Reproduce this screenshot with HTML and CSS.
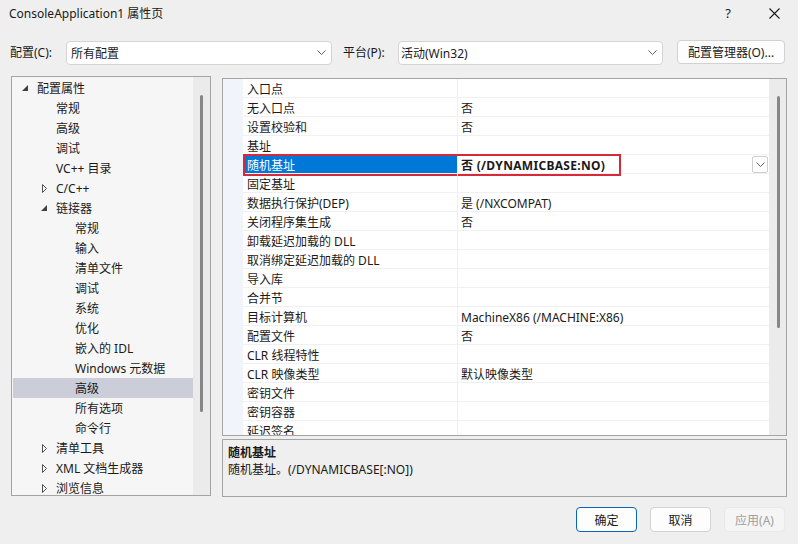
FILE: index.html
```html
<!DOCTYPE html>
<html lang="zh-CN">
<head>
    <meta charset="UTF-8">
    <meta name="viewport" content="width=device-width, initial-scale=1.0">
    <title>ConsoleApplication1 属性页</title>
    <link rel="stylesheet" href="styles.css">
</head>
<body>
<div class="dialog">
    <div class="titlebar">
        <span class="title">ConsoleApplication1 属性页</span>
        <span class="help">?</span>
        <span class="close">
            <svg width="11" height="11" viewBox="0 0 11 11"><path d="M0.5 0.5 L10.5 10.5 M10.5 0.5 L0.5 10.5" stroke="#1a1a1a" stroke-width="1.1" fill="none"/></svg>
        </span>
    </div>

    <div class="toolbar">
        <span class="tb-label">配置(C):</span>
        <div class="combo combo-config">
            <span>所有配置</span>
            <svg class="chev" width="9" height="5" viewBox="0 0 9 5"><path d="M0.5 0.5 L4.5 4.5 L8.5 0.5" stroke="#606060" fill="none"/></svg>
        </div>
        <span class="tb-label platform-label">平台(P):</span>
        <div class="combo combo-platform">
            <span>活动(Win32)</span>
            <svg class="chev" width="9" height="5" viewBox="0 0 9 5"><path d="M0.5 0.5 L4.5 4.5 L8.5 0.5" stroke="#606060" fill="none"/></svg>
        </div>
        <button class="btn btn-manager">配置管理器(O)...</button>
    </div>

    <div class="main">
        <div class="tree">
            <ul class="tree-list">
                <li class="node l0"><span class="toggle"><svg width="6" height="6" viewBox="0 0 6 6"><polygon points="6,0 6,6 0,6" fill="#404040"/></svg></span>配置属性</li>
                <li class="node l1"><span class="toggle"></span>常规</li>
                <li class="node l1"><span class="toggle"></span>高级</li>
                <li class="node l1"><span class="toggle"></span>调试</li>
                <li class="node l1"><span class="toggle"></span>VC++ 目录</li>
                <li class="node l1"><span class="toggle"><svg class="closed" width="5" height="9" viewBox="0 0 5 9"><polygon points="0.5,0.5 4.5,4.5 0.5,8.5" fill="none" stroke="#505050"/></svg></span>C/C++</li>
                <li class="node l1"><span class="toggle"><svg width="6" height="6" viewBox="0 0 6 6"><polygon points="6,0 6,6 0,6" fill="#404040"/></svg></span>链接器</li>
                <li class="node l2"><span class="toggle"></span>常规</li>
                <li class="node l2"><span class="toggle"></span>输入</li>
                <li class="node l2"><span class="toggle"></span>清单文件</li>
                <li class="node l2"><span class="toggle"></span>调试</li>
                <li class="node l2"><span class="toggle"></span>系统</li>
                <li class="node l2"><span class="toggle"></span>优化</li>
                <li class="node l2"><span class="toggle"></span>嵌入的 IDL</li>
                <li class="node l2"><span class="toggle"></span>Windows 元数据</li>
                <li class="node l2 selected"><span class="toggle"></span>高级</li>
                <li class="node l2"><span class="toggle"></span>所有选项</li>
                <li class="node l2"><span class="toggle"></span>命令行</li>
                <li class="node l1"><span class="toggle"><svg class="closed" width="5" height="9" viewBox="0 0 5 9"><polygon points="0.5,0.5 4.5,4.5 0.5,8.5" fill="none" stroke="#505050"/></svg></span>清单工具</li>
                <li class="node l1"><span class="toggle"><svg class="closed" width="5" height="9" viewBox="0 0 5 9"><polygon points="0.5,0.5 4.5,4.5 0.5,8.5" fill="none" stroke="#505050"/></svg></span>XML 文档生成器</li>
                <li class="node l1"><span class="toggle"><svg class="closed" width="5" height="9" viewBox="0 0 5 9"><polygon points="0.5,0.5 4.5,4.5 0.5,8.5" fill="none" stroke="#505050"/></svg></span>浏览信息</li>
            </ul>
            <div class="vscroll tree-scroll"><div class="thumb"></div></div>
        </div>

        <div class="right">
            <div class="grid">
                <div class="gutter"></div>
                <div class="rows">
                    <div class="row"><div class="name">入口点</div><div class="value"></div></div>
                    <div class="row"><div class="name">无入口点</div><div class="value">否</div></div>
                    <div class="row"><div class="name">设置校验和</div><div class="value">否</div></div>
                    <div class="row"><div class="name">基址</div><div class="value"></div></div>
                    <div class="row active">
                        <div class="name">随机基址</div>
                        <div class="value">否 (/DYNAMICBASE:NO)</div>
                        <span class="drop">
                            <svg width="9" height="5" viewBox="0 0 9 5"><path d="M0.5 0.5 L4.5 4.5 L8.5 0.5" stroke="#606060" fill="none"/></svg>
                        </span>
                        <span class="mark"></span>
                    </div>
                    <div class="row"><div class="name">固定基址</div><div class="value"></div></div>
                    <div class="row"><div class="name">数据执行保护(DEP)</div><div class="value">是 (/NXCOMPAT)</div></div>
                    <div class="row"><div class="name">关闭程序集生成</div><div class="value">否</div></div>
                    <div class="row"><div class="name">卸载延迟加载的 DLL</div><div class="value"></div></div>
                    <div class="row"><div class="name">取消绑定延迟加载的 DLL</div><div class="value"></div></div>
                    <div class="row"><div class="name">导入库</div><div class="value"></div></div>
                    <div class="row"><div class="name">合并节</div><div class="value"></div></div>
                    <div class="row"><div class="name">目标计算机</div><div class="value">MachineX86 (/MACHINE:X86)</div></div>
                    <div class="row"><div class="name">配置文件</div><div class="value">否</div></div>
                    <div class="row"><div class="name">CLR 线程特性</div><div class="value"></div></div>
                    <div class="row"><div class="name">CLR 映像类型</div><div class="value">默认映像类型</div></div>
                    <div class="row"><div class="name">密钥文件</div><div class="value"></div></div>
                    <div class="row"><div class="name">密钥容器</div><div class="value"></div></div>
                    <div class="row"><div class="name">延迟签名</div><div class="value"></div></div>
                </div>
                <div class="vscroll grid-scroll"><div class="thumb"></div></div>
            </div>
            <div class="desc">
                <div class="desc-title">随机基址</div>
                <div class="desc-text">随机基址。(/DYNAMICBASE[:NO])</div>
            </div>
        </div>
    </div>

    <div class="footer">
        <button class="btn btn-ok">确定</button>
        <button class="btn">取消</button>
        <button class="btn" disabled>应用(A)</button>
    </div>
</div>
</body>
</html>
```

FILE: styles.css
```css
body {
    margin: 0;
    background-color: #efefef;
    font-family: "Noto Sans", "Noto Sans CJK SC", sans-serif;
    font-size: 12px;
    color: #1a1a1a;
}
.dialog {
    width: 798px;
    height: 544px;
    overflow: hidden;
    background-color: #efefef;
}
.titlebar {
    display: flex;
    align-items: center;
    height: 26px;
    padding-left: 9px;
}
.title {
    flex: 1;
}
.help {
    width: 12px;
    margin-right: 35px;
    text-align: center;
    font-size: 13px;
}
.close {
    display: flex;
    width: 11px;
    margin-right: 18px;
}
.toolbar {
    display: flex;
    align-items: center;
    height: 25px;
    margin-top: 13px;
    padding-left: 10px;
}
.tb-label {
    width: 56px;
}
.platform-label {
    margin-left: 11px;
    width: 55px;
}
.combo {
    display: flex;
    align-items: center;
    box-sizing: border-box;
    height: 24px;
    margin-top: 2px;
    padding: 0 5px 0 4px;
    background-color: #fff;
    border: 1px solid #d4d4d4;
    border-radius: 4px;
}
.combo span {
    flex: 1;
}
.combo-config {
    width: 266px;
}
.combo-platform {
    width: 265px;
    padding-left: 2px;
}
.btn {
    box-sizing: border-box;
    height: 25px;
    padding: 0;
    font-family: inherit;
    font-size: 12px;
    color: #1a1a1a;
    background-color: #fdfdfd;
    border: 1px solid #d2d2d2;
    border-radius: 4px;
}
.btn-manager {
    width: 108px;
    height: 24px;
    margin-left: 14px;
}
.main {
    display: flex;
    gap: 11px;
    height: 421px;
    margin-top: 12px;
    padding-left: 11px;
}
.tree {
    display: flex;
    box-sizing: border-box;
    width: 200px;
    height: 420px;
    background-color: #f6f6f6;
    border: 1px solid #a4a4a4;
    overflow: hidden;
}
.tree-list {
    width: 181px;
    margin: 0;
    padding: 1px 0 0 0;
    list-style: none;
}
.node {
    display: flex;
    align-items: center;
    height: 20px;
    margin-left: 1px;
    white-space: nowrap;
}
.node.l0 { padding-left: 7px; }
.node.l1 { padding-left: 26px; }
.node.l2 { padding-left: 45px; }
.node.selected {
    background-color: #cbcdd9;
}
.toggle {
    display: flex;
    align-items: center;
    width: 17px;
    height: 20px;
    padding-left: 2px;
    box-sizing: border-box;
}
.toggle .closed {
    margin-left: 1px;
}
.vscroll {
    position: relative;
    width: 17px;
    background-color: #ebebeb;
}
.thumb {
    width: 3px;
    border-radius: 2px;
    background-color: #878787;
}
.tree-scroll .thumb {
    margin: 18px 0 0 7px;
    height: 317px;
}
.right {
    display: flex;
    flex-direction: column;
    gap: 3px;
    width: 565px;
    padding-top: 2px;
}
.grid {
    display: flex;
    box-sizing: border-box;
    height: 358px;
    background-color: #fff;
    border: 1px solid #a4a4a4;
    overflow: hidden;
}
.gutter {
    width: 20px;
    background-color: #f1f4fa;
}
.rows {
    width: 526px;
}
.row {
    position: relative;
    display: flex;
    height: 18px;
    line-height: 21px;
    border-bottom: 1px solid #f0f0f0;
    white-space: nowrap;
}
.name {
    box-sizing: border-box;
    width: 214px;
    height: 18px;
    padding-left: 4px;
}
.value {
    flex: 1;
    height: 18px;
    padding-left: 3px;
    border-left: 1px solid #f0f0f0;
}
.row.active .name {
    background-color: #0078d7;
    color: #fff;
}
.row.active .value {
    font-weight: bold;
    letter-spacing: 0.3px;
}
.drop {
    display: flex;
    align-items: center;
    justify-content: center;
    box-sizing: border-box;
    width: 16px;
    height: 17px;
    margin: 1px 1px 0 0;
    background-color: #fff;
    border: 1px solid #cfcfcf;
    border-radius: 2px;
}
.mark {
    position: absolute;
    left: 0;
    top: -1px;
    width: 378px;
    height: 22px;
    box-sizing: border-box;
    border: 2px solid #d62a3a;
}
.grid-scroll .thumb {
    margin: 17px 0 0 8px;
    height: 232px;
}
.desc {
    box-sizing: border-box;
    height: 58px;
    padding: 4px 5px;
    border: 1px solid #a4a4a4;
    line-height: 17px;
}
.desc-title {
    font-weight: bold;
}
.footer {
    display: flex;
    justify-content: flex-end;
    gap: 13px;
    margin-top: 10px;
    padding-right: 13px;
}
.footer .btn {
    width: 61px;
}
.btn-ok {
    border-color: #0a64b8;
}
.btn:disabled {
    color: #a0a0a0;
    background-color: #f5f5f5;
    border-color: #e8e8e8;
}
```
